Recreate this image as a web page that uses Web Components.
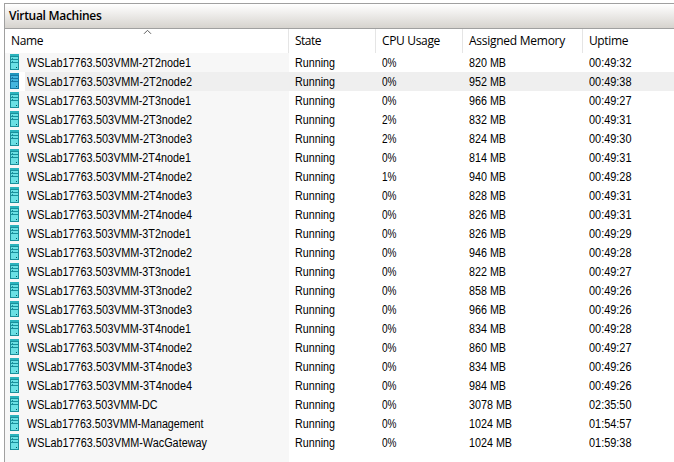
<!DOCTYPE html>
<html lang="en"><head><meta charset="utf-8"><title>Virtual Machines</title>
<style>html,body{margin:0;background:#fff;overflow:hidden}</style></head>
<body><vm-panel></vm-panel>
<script>
// Text fitted to a given pixel width: by letter-spacing, or by condensing the glyphs.
class FitText extends HTMLElement{
  connectedCallback(){
    const r=this.attachShadow({mode:'open'});
    r.innerHTML='<style>:host{display:inline-block;white-space:pre;transform-origin:0 50%}</style><span><slot></slot></span>';
    const w=+this.getAttribute('w'),n=this.textContent.length;
    const cur=r.querySelector('span').getBoundingClientRect().width;
    if(this.hasAttribute('condense')) this.style.transform=`scaleX(${(w/cur).toFixed(4)})`;
    else this.style.letterSpacing=((w-cur)/n).toFixed(3)+'px';
  }
}
class VmIcon extends HTMLElement{
  connectedCallback(){
    this.attachShadow({mode:'open'}).innerHTML=`<style>:host{display:block;width:9px;height:16px;--edge:#1a8f9b;--top:#2bb3bd;--face:#6be0e4}
    :host([selected]){--edge:#1878a4;--top:#2196bd;--face:#45b5de}svg{display:block}</style>
    <svg width="9" height="16" shape-rendering="crispEdges"><path fill="var(--edge)" d="M0 0h9v16H0z"/><path fill="var(--top)" d="M0 0h9v2H0z"/><path fill="var(--face)" d="M1 3h7v12H1z"/><path fill="var(--edge)" d="M1 5h7v1H1zM1 8h7v1H1zM2 4h1v1H2zM2 7h1v1H2z"/><path fill="#0b5563" d="M6 13h1v1H6z"/></svg>`;
  }
}
class VmHeader extends HTMLElement{
  connectedCallback(){
    const cols=[['Name',32],['State',26],['CPU Usage',58],['Assigned Memory',96],['Uptime',39]];
    this.attachShadow({mode:'open'}).innerHTML=`<style>:host{display:grid;grid-template-columns:284px 87px 87px 120px 1fr;height:24px;font:12px/24px "Open Sans","Noto Sans",sans-serif;color:#000}
    div{box-sizing:border-box;padding-left:6px;border-right:1px solid #e5e5e5;position:relative}
    div:last-child{border:0}
    svg{position:absolute;left:138px;top:0}</style>`+
    cols.map((c,i)=>`<div><fit-text w="${c[1]}">${c[0]}</fit-text>${i?'':'<svg width="9" height="5"><path d="M1 4.8 4.5 1.3 8 4.8" fill="none" stroke="#5a5a5a"/></svg>'}</div>`).join('');
  }
}
class VmRow extends HTMLElement{
  connectedCallback(){
    const [name,nw,cpu,mem,up]=this.getAttribute('data').split('|');
    const sel=this.hasAttribute('selected');
    this.attachShadow({mode:'open'}).innerHTML=`<style>:host{display:grid;grid-template-columns:14px 6px 264px 87px 87px 120px 1fr;height:19px;font:12px/20px "Liberation Sans",sans-serif;color:#000}
    vm-icon{margin:1px 0 0 5px}div{padding-left:6px;height:19px}.n{padding-left:2px}
    :host([selected]) i{background:#fff}
    :host([selected]) .c{background:#efefef}</style>
    <vm-icon ${sel?'selected':''}></vm-icon><i></i>
    <div class="c n"><fit-text condense w="${nw}">${name}</fit-text></div>
    <div class="c"><fit-text condense w="40">Running</fit-text></div>
    <div class="c"><fit-text condense w="14.5">${cpu}</fit-text></div>
    <div class="c"><fit-text condense w="${mem.length>6?43:37}">${mem}</fit-text></div>
    <div class="c"><fit-text condense w="42.5">${up}</fit-text></div>`;
  }
}
class VmPanel extends HTMLElement{
  connectedCallback(){
    const P='WSLab17763.503VMM-';
    const rows=`2T2node1|164|0%|820 MB|00:49:32
2T2node2|165|0%|952 MB|00:49:38
2T3node1|164|0%|966 MB|00:49:27
2T3node2|165|2%|832 MB|00:49:31
2T3node3|165|2%|824 MB|00:49:30
2T4node1|164|0%|814 MB|00:49:31
2T4node2|165|1%|940 MB|00:49:28
2T4node3|165|0%|828 MB|00:49:31
2T4node4|165|0%|826 MB|00:49:31
3T2node1|164|0%|826 MB|00:49:29
3T2node2|165|0%|946 MB|00:49:28
3T3node1|164|0%|822 MB|00:49:27
3T3node2|165|0%|858 MB|00:49:26
3T3node3|165|0%|966 MB|00:49:26
3T4node1|164|0%|834 MB|00:49:28
3T4node2|165|0%|860 MB|00:49:27
3T4node3|165|0%|834 MB|00:49:26
3T4node4|165|0%|984 MB|00:49:26
DC|130.5|0%|3078 MB|02:35:50
Management|176.5|0%|1024 MB|01:54:57
WacGateway|180|0%|1024 MB|01:59:38`.split('\n');
    this.attachShadow({mode:'open'}).innerHTML=`<style>:host{display:block;box-sizing:border-box;height:459px;margin:3px 0 0 4px;border:solid #a0a0a0;border-width:1px 0 0 1px}
    header{height:24px;border-bottom:1px solid #a0a0a0;background:linear-gradient(#fff,#d6d3ce);font:600 12px/24px "Open Sans","Noto Sans",sans-serif;padding-left:4px;color:#000}
    main{height:409px;background:linear-gradient(#f7f7f7,#f7f7f7) 0 0/284px 100% no-repeat}</style>
    <header><fit-text w="92.5">Virtual Machines</fit-text></header><vm-header></vm-header>
    <main>${rows.map((r,i)=>`<vm-row data="${P+r}" ${i==1?'selected':''}></vm-row>`).join('')}</main>`;
  }
}
customElements.define('fit-text',FitText);
customElements.define('vm-icon',VmIcon);
customElements.define('vm-header',VmHeader);
customElements.define('vm-row',VmRow);
customElements.define('vm-panel',VmPanel);
</script></body></html>
